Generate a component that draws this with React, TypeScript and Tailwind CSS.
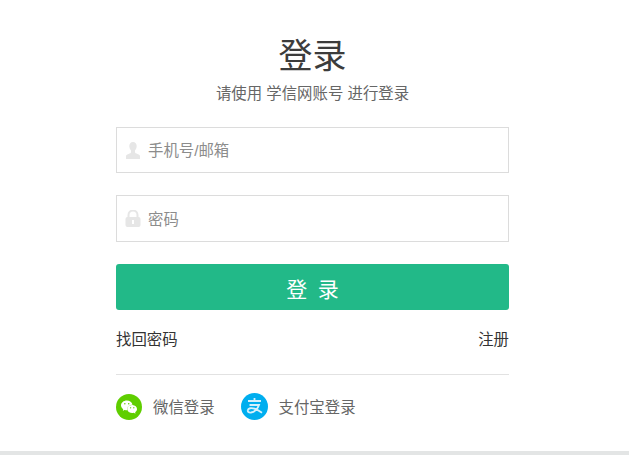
import { SiWechat } from "react-icons/si";

function UserIcon() {
  return (
    <svg viewBox="0 0 16 17" className="h-[17px] w-[16px] shrink-0" fill="#e6e6e6">
      <path d="M8 0c2.300 0 3.700 1.700 3.700 4.100 0 1.800-.7 3.400-1.700 4.500v1.600c0 .7 1 1.100 2.500 1.800 1.800.7 2.500 1.200 2.500 2.200V17H1v-2.800c0-1 .7-1.500 2.500-2.200C5 11.300 6 10.900 6 10.200V8.600C5 7.500 4.300 5.900 4.300 4.100 4.300 1.700 5.700 0 8 0z" />
    </svg>
  );
}

function LockIcon() {
  return (
    <svg viewBox="0 0 16 17" className="h-[17px] w-[16px] shrink-0">
      <path d="M3.500 8V5a4.500 4.500 0 0 1 9 0v3" fill="none" stroke="#e6e6e6" strokeWidth="2" />
      <rect x="0.500" y="7" width="15" height="10" rx="2" fill="#e6e6e6" />
      <rect x="7" y="10" width="2" height="4" fill="#fff" />
    </svg>
  );
}

function AlipayIcon() {
  return (
    <svg viewBox="0 0 27 27" className="h-[27px] w-[27px]">
      <circle cx="13.500" cy="13.500" r="13.500" fill="#00aeef" />
      <path
        d="M7 8h13M13.500 5v3M8.500 12h9.500c-1.500 4-4.500 7-8 7.500-2.500.3-3.500-1-3.200-2.300.4-2 3.500-2.700 6.700-1.500 2.500.9 5 2.400 7.500 4"
        fill="none"
        stroke="#d5f0fb"
        strokeWidth="1.800"
      />
    </svg>
  );
}

export default function App() {
  return (
    <div className="flex h-[455px] w-[629px] flex-col overflow-hidden bg-white font-['Liberation_Sans','Noto_Sans_CJK_SC',sans-serif]">
      <div className="ml-[116px] flex w-[393px] flex-1 flex-col">
        <h1 className="mt-[33px] text-center text-[34px] leading-[46px] text-[#3c3c3c]">登录</h1>
        <p className="mt-[5px] text-center text-[15.4px] leading-[20px] text-[#666]">请使用 学信网账号 进行登录</p>

        <div className="mt-[23px] flex h-[46px] items-center gap-[7px] border border-[#dcdcdc] pl-[8px] text-[15.4px] text-[#8c8c8c]">
          <UserIcon />
          <span className="pt-[2px]">手机号/邮箱</span>
        </div>
        <div className="mt-[22px] flex h-[47px] items-center gap-[7px] border border-[#dcdcdc] pl-[8px] text-[15.4px] text-[#8c8c8c]">
          <LockIcon />
          <span className="pt-[2px]">密码</span>
        </div>

        <button className="mt-[22px] h-[46px] rounded-[3px] bg-[#22b988] pt-[5px] text-[21px] tracking-[0.5em] indent-[0.5em] text-white">
          登录
        </button>

        <div className="mt-[20px] flex justify-between text-[15.4px] leading-[20px] text-[#333]">
          <span>找回密码</span>
          <span>注册</span>
        </div>

        <div className="mt-[24px] border-t border-[#e2e2e2]" />

        <div className="mt-[18px] flex items-center text-[15.4px] text-[#666]">
          <span className="flex h-[26px] w-[26px] items-center justify-center rounded-full bg-[#5fce00]">
            <SiWechat className="h-[16px] w-[16px] text-[#fff]" />
          </span>
          <span className="ml-[11px] pt-[2px]">微信登录</span>
          <span className="ml-[26px] flex h-[27px] w-[27px] items-center justify-center">
            <AlipayIcon />
          </span>
          <span className="ml-[11px] pt-[2px]">支付宝登录</span>
        </div>
      </div>
      <div className="h-[4px] bg-[#e3e5e5]" />
    </div>
  );
}
